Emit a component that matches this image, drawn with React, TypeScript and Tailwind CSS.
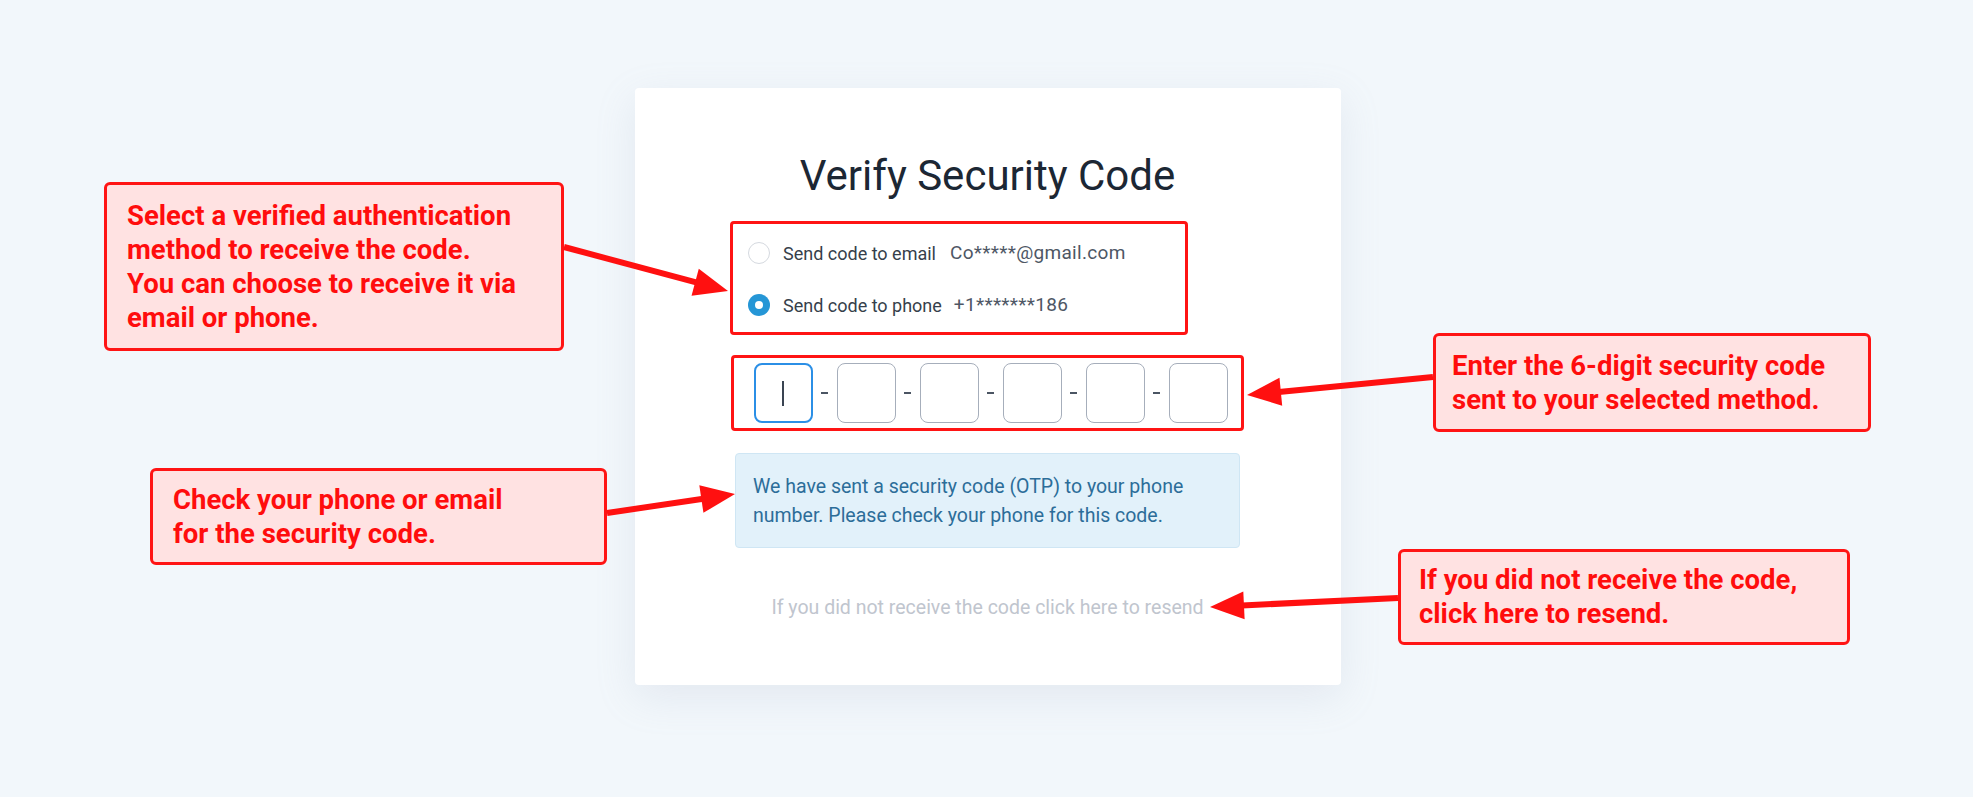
import { useState } from "react";

type Pt = { x1: number; y1: number; x2: number; y2: number };

// annotation arrows, page coordinates
const arrows: Pt[] = [
  { x1: 564, y1: 247, x2: 728, y2: 291 },
  { x1: 607, y1: 513, x2: 735, y2: 494 },
  { x1: 1433, y1: 377, x2: 1247, y2: 395 },
  { x1: 1398, y1: 598, x2: 1210, y2: 607 },
];

function Arrow({ x1, y1, x2, y2 }: Pt) {
  const dx = x2 - x1;
  const dy = y2 - y1;
  const len = Math.hypot(dx, dy);
  const ux = dx / len;
  const uy = dy / len;
  const head = 34;
  const half = 14;
  const bx = x2 - ux * head;
  const by = y2 - uy * head;
  const pts = `${x2},${y2} ${bx - uy * half},${by + ux * half} ${bx + uy * half},${by - ux * half}`;
  return (
    <g>
      <line x1={x1} y1={y1} x2={bx + ux * 2} y2={by + uy * 2} stroke="#ff1010" strokeWidth={6} />
      <polygon points={pts} fill="#ff1010" />
    </g>
  );
}

function Note({ className, children }: { className: string; children: React.ReactNode }) {
  return (
    <div
      className={`absolute flex items-center rounded-[6px] border-[3px] border-[#ff1414] bg-[#ffe2e2] text-[27.5px] font-bold leading-[34px] text-[#ff0d0d] ${className}`}
    >
      <p>{children}</p>
    </div>
  );
}

export default function App() {
  const [method, setMethod] = useState<"email" | "phone">("phone");

  return (
    <div className="relative flex min-h-[797px] justify-center bg-[#f2f7fb] pt-[88px] font-['Roboto',sans-serif]">
      <div className="ml-[2px] flex h-[597px] w-[706px] flex-col items-center rounded-[4px] bg-white pt-[62px] shadow-[0_12px_40px_rgba(148,163,184,0.16)]">
        <h1 className="text-[42px] font-normal leading-[52px] text-[#1c2734]">Verify Security Code</h1>

        <div className="mt-[19px] flex w-[513px] flex-col">
          <div className="-ml-[1px] flex h-[114px] w-[458px] flex-col gap-[22px] rounded-[4px] border-[3px] border-[#ff1414] pl-[15px] pt-[14px]">
            <label className="flex h-[30px] items-center" onClick={() => setMethod("email")}>
              <span
                className={`flex h-[22px] w-[22px] items-center justify-center rounded-full ${
                  method === "email" ? "bg-[#2596d6]" : "border-[1.5px] border-[#d5d9df] bg-white"
                }`}
              >
                {method === "email" && <span className="h-[8px] w-[8px] rounded-full bg-white" />}
              </span>
              <span className="ml-[13px] text-[18px] text-[#363f4b]">Send code to email</span>
              <span className="ml-[14px] text-[19px] tracking-[0.3px] text-[#4e5765]">Co*****@gmail.com</span>
            </label>
            <label className="flex h-[30px] items-center" onClick={() => setMethod("phone")}>
              <span
                className={`flex h-[22px] w-[22px] items-center justify-center rounded-full ${
                  method === "phone" ? "bg-[#2596d6]" : "border-[1.5px] border-[#d5d9df] bg-white"
                }`}
              >
                {method === "phone" && <span className="h-[8px] w-[8px] rounded-full bg-white" />}
              </span>
              <span className="ml-[13px] text-[18px] text-[#363f4b]">Send code to phone</span>
              <span className="ml-[12px] text-[19px] tracking-[0.3px] text-[#4e5765]">+1*******186</span>
            </label>
          </div>

          <div className="mt-[20px] flex h-[76px] items-center justify-center rounded-[4px] border-[3px] border-[#ff1414] pl-[6px]">
            {[0, 1, 2, 3, 4, 5].map((i) => (
              <div key={i} className="flex items-center">
                {i > 0 && (
                  <span className="flex w-[24px] justify-center">
                    <span className="h-[2px] w-[7px] bg-[#4b5563]" />
                  </span>
                )}
                <div
                  className={`flex h-[60px] w-[59px] items-center justify-center rounded-[8px] ${
                    i === 0 ? "border-2 border-[#2b8fe6]" : "border-[1.5px] border-[#a6aebb]"
                  }`}
                >
                  {i === 0 && <span className="h-[25px] w-[1.5px] bg-[#3a4452]" />}
                </div>
              </div>
            ))}
          </div>

          <div className="mx-[4px] mt-[22px] rounded-[4px] border border-[#cfe6f4] bg-[#e2f1fa] px-[17px] pb-[17px] pt-[18px] text-[19.5px] leading-[29px] text-[#2c6d99]">
            We have sent a security code (OTP) to your phone
            <br />
            number. Please check your phone for this code.
          </div>

          <p className="mt-[46px] text-center text-[19.5px] leading-[28px] text-[#c0c5ce]">
            If you did not receive the code click here to resend
          </p>
        </div>
      </div>

      <Note className="left-[104px] top-[182px] h-[169px] w-[460px] pl-[20px]">
        Select a verified authentication
        <br />
        method to receive the code.
        <br />
        You can choose to receive it via
        <br />
        email or phone.
      </Note>
      <Note className="left-[150px] top-[468px] h-[97px] w-[457px] pl-[20px]">
        Check your phone or email
        <br />
        for the security code.
      </Note>
      <Note className="left-[1433px] top-[333px] h-[99px] w-[438px] pl-[16px]">
        Enter the 6-digit security code
        <br />
        sent to your selected method.
      </Note>
      <Note className="left-[1398px] top-[549px] h-[96px] w-[452px] pl-[18px]">
        If you did not receive the code,
        <br />
        click here to resend.
      </Note>

      <svg className="pointer-events-none absolute left-0 top-0" width={1973} height={797}>
        {arrows.map((a, i) => (
          <Arrow key={i} {...a} />
        ))}
      </svg>
    </div>
  );
}
